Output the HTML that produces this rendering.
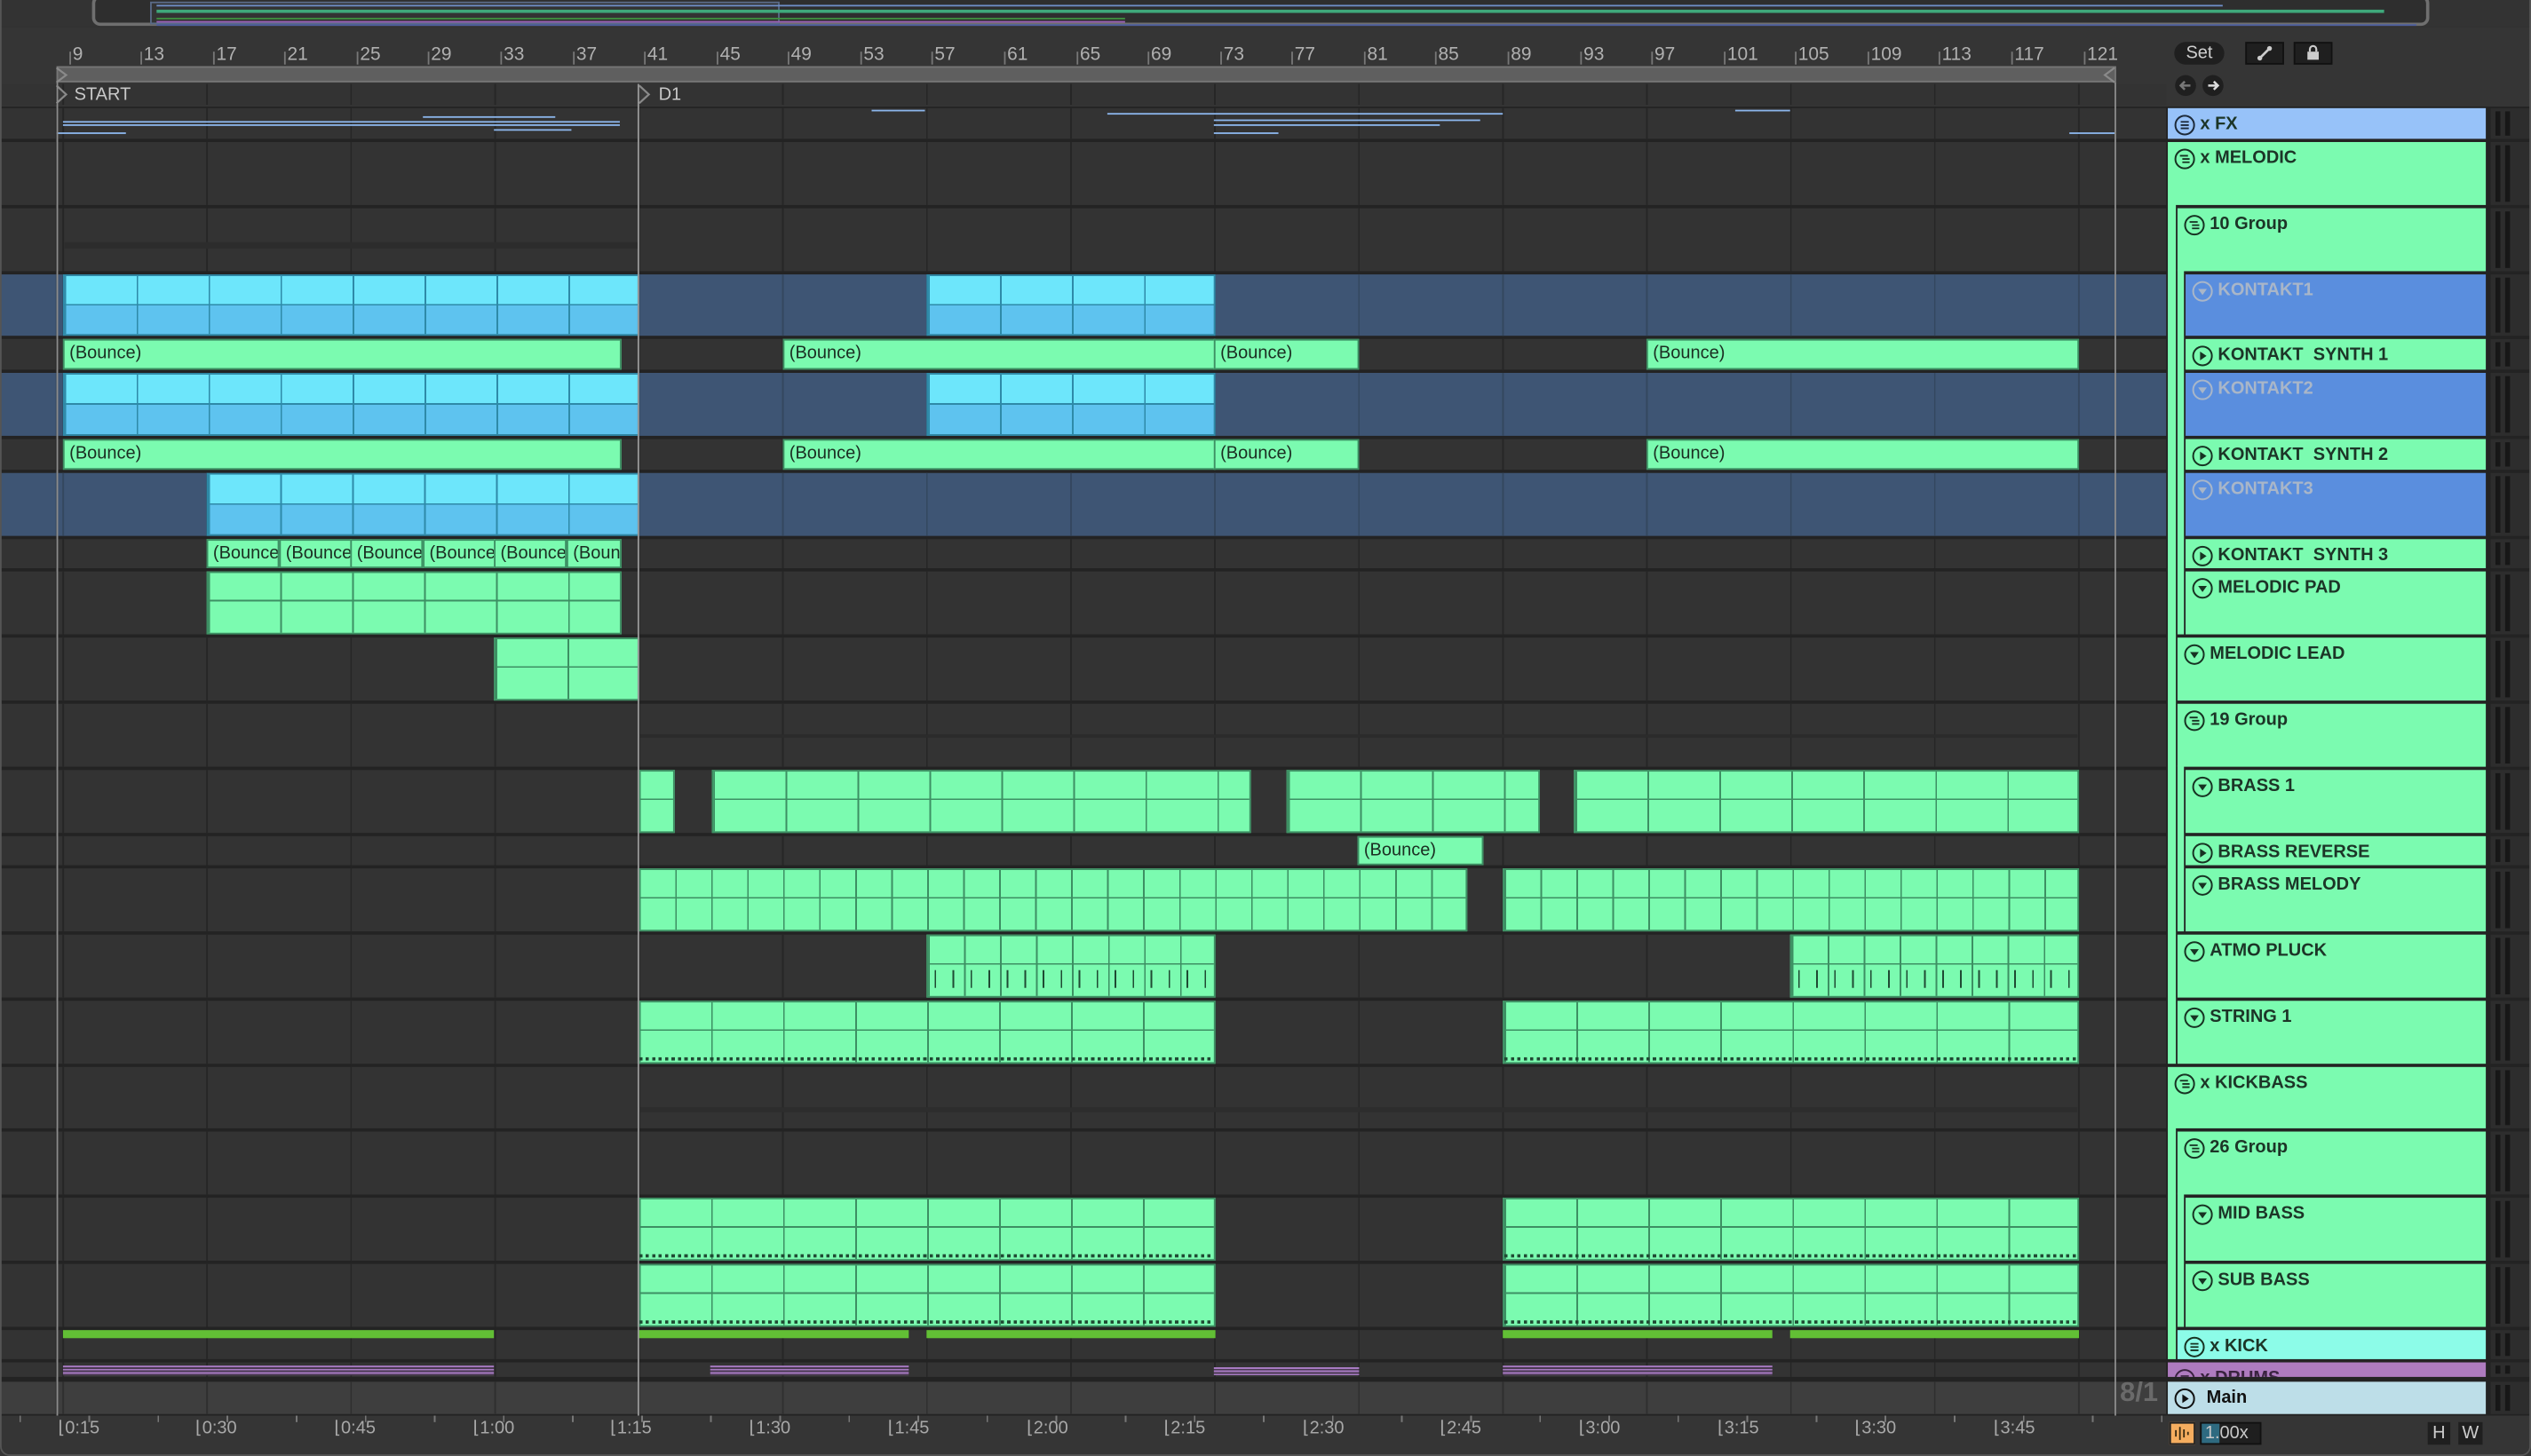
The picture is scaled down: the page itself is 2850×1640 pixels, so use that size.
<!DOCTYPE html>
<html><head><meta charset="utf-8"><style>
*{margin:0;padding:0;box-sizing:border-box}
body{width:2850px;height:1640px;overflow:hidden;background:#2a2a2a;font-family:"Liberation Sans",sans-serif}
#w{position:absolute;left:0;top:0;width:1568px;height:902px;transform:scale(1.81760,1.81818);transform-origin:0 0;background:#232323;overflow:hidden}
.a{position:absolute}
.row{position:absolute;left:0;width:1342px;background-color:#333;background-image:repeating-linear-gradient(90deg,#262626 0 1px,transparent 1px 89.2px);background-position:38.6px 0}
.blue{background-color:#3e5574;background-image:repeating-linear-gradient(90deg,#34475f 0 1px,transparent 1px 89.2px)}
.g{position:absolute;background-color:#7bfbb0;border:1px solid #3d8f63;overflow:hidden;
background-image:linear-gradient(to bottom,transparent 0 45%,#3d8f63 45% calc(45% + 1px),transparent calc(45% + 1px)),repeating-linear-gradient(90deg,#3d8f63 0 1px,transparent 1px 44.6px)}
.g2{background-image:linear-gradient(to bottom,transparent 0 45%,#3d8f63 45% calc(45% + 1px),transparent calc(45% + 1px)),repeating-linear-gradient(90deg,#3d8f63 0 1px,transparent 1px 22.3px)}
.b{position:absolute;background:#7bfbb0;border:1px solid #3d8f63;font-size:11px;color:#1b2e22;line-height:17px;padding-left:3px;overflow:hidden;white-space:nowrap}
.c{position:absolute;border:1px solid #2e8aa8;
background-image:repeating-linear-gradient(90deg,#2e8aa8 0 1px,transparent 1px 44.6px),linear-gradient(to bottom,#6de6fb 0 48%,#2e8aa8 48% calc(48% + 1px),#5ec3ef calc(48% + 1px))}
.bt{position:absolute;left:0;right:0;bottom:1px;height:2px;background:repeating-linear-gradient(90deg,#1f4a33 0 2px,transparent 2px 4px)}
.h{position:absolute;width:auto;right:28px;font-size:11px;font-weight:bold;color:#1c3527;overflow:hidden;white-space:nowrap}
.h svg{position:absolute;left:4px;top:4px}
.h span{position:absolute;left:20px;top:4px;line-height:13px}
.gray{color:#a9b6c8}
.st{position:absolute}
.m{position:absolute;left:1543px;width:25px;background:#2d2d2d}
.m:before,.m:after{content:"";position:absolute;top:2px;bottom:2px;width:3px;background:#171717}
.m:before{left:3px}.m:after{left:9px}
.rl{position:absolute;top:28px;font-size:11.5px;color:#b0b0b0}
.rt{position:absolute;top:32px;width:1px;height:8px;background:#777}
.tl{position:absolute;top:878px;font-size:11px;color:#a8a8a8}
.ln{position:absolute;background:#8cb6ec;height:1px}
</style></head><body><div id="w">

<div class="a" style="left:0;top:0;width:1568px;height:66px;background:#353535"></div>
<div class="a" style="left:0;top:0;width:1568px;height:17px;background:#333"></div>
<div class="a" style="left:57px;top:-3px;width:1448px;height:19px;border:2px solid #6f6f6f;border-radius:5px;background:#2e2e2e"></div>
<div class="a" style="left:93px;top:1px;width:390px;height:14px;border:1px solid #5a6b88;background:#333"></div>
<div class="a" style="left:97px;top:6px;width:1380px;height:2px;background:#3fa87b"></div>
<div class="a" style="left:97px;top:3px;width:1280px;height:1px;background:#6f8fc8"></div>
<div class="a" style="left:97px;top:11px;width:600px;height:1px;background:#3f8f3f"></div>
<div class="a" style="left:97px;top:13px;width:600px;height:1px;background:#9a5fb5"></div>
<div class="a" style="left:97px;top:15px;width:1400px;height:1px;background:#4e5fa0"></div>

<div class="rt" style="left:43px"></div><div class="rl" style="left:45px">9</div>
<div class="rt" style="left:87px"></div><div class="rl" style="left:89px">13</div>
<div class="rt" style="left:132px"></div><div class="rl" style="left:134px">17</div>
<div class="rt" style="left:176px"></div><div class="rl" style="left:178px">21</div>
<div class="rt" style="left:221px"></div><div class="rl" style="left:223px">25</div>
<div class="rt" style="left:265px"></div><div class="rl" style="left:267px">29</div>
<div class="rt" style="left:310px"></div><div class="rl" style="left:312px">33</div>
<div class="rt" style="left:355px"></div><div class="rl" style="left:357px">37</div>
<div class="rt" style="left:399px"></div><div class="rl" style="left:401px">41</div>
<div class="rt" style="left:444px"></div><div class="rl" style="left:446px">45</div>
<div class="rt" style="left:488px"></div><div class="rl" style="left:490px">49</div>
<div class="rt" style="left:533px"></div><div class="rl" style="left:535px">53</div>
<div class="rt" style="left:577px"></div><div class="rl" style="left:579px">57</div>
<div class="rt" style="left:622px"></div><div class="rl" style="left:624px">61</div>
<div class="rt" style="left:667px"></div><div class="rl" style="left:669px">65</div>
<div class="rt" style="left:711px"></div><div class="rl" style="left:713px">69</div>
<div class="rt" style="left:756px"></div><div class="rl" style="left:758px">73</div>
<div class="rt" style="left:800px"></div><div class="rl" style="left:802px">77</div>
<div class="rt" style="left:845px"></div><div class="rl" style="left:847px">81</div>
<div class="rt" style="left:889px"></div><div class="rl" style="left:891px">85</div>
<div class="rt" style="left:934px"></div><div class="rl" style="left:936px">89</div>
<div class="rt" style="left:979px"></div><div class="rl" style="left:981px">93</div>
<div class="rt" style="left:1023px"></div><div class="rl" style="left:1025px">97</div>
<div class="rt" style="left:1068px"></div><div class="rl" style="left:1070px">101</div>
<div class="rt" style="left:1112px"></div><div class="rl" style="left:1114px">105</div>
<div class="rt" style="left:1157px"></div><div class="rl" style="left:1159px">109</div>
<div class="rt" style="left:1201px"></div><div class="rl" style="left:1203px">113</div>
<div class="rt" style="left:1246px"></div><div class="rl" style="left:1248px">117</div>
<div class="rt" style="left:1291px"></div><div class="rl" style="left:1293px">121</div>
<div class="a" style="left:35px;top:41px;width:1276px;height:10px;background:#5f5f5f;border:1px solid #777"></div>
<svg class="a" style="left:34px;top:41px" width="1280" height="12"><path d="M1 1 L7 5.5 L1 10" fill="none" stroke="#8a8a8a" stroke-width="1.2"/><path d="M1276 1 L1270 5.5 L1276 10" fill="none" stroke="#8a8a8a" stroke-width="1.2"/></svg>
<div class="a" style="left:0;top:52px;width:1342px;height:13px;background:#333;background-image:repeating-linear-gradient(90deg,#262626 0 1px,transparent 1px 89.2px);background-position:38.6px 0"></div>
<svg class="a" style="left:34px;top:52px" width="370" height="13"><path d="M1 1 L7 6.5 L1 12" fill="#3a3a3a" stroke="#8a8a8a" stroke-width="1.2"/><path d="M362 1 L368 6.5 L362 12" fill="#3a3a3a" stroke="#8a8a8a" stroke-width="1.2"/></svg>
<div class="a" style="left:46px;top:53px;font-size:11px;color:#c8c8c8">START</div>
<div class="a" style="left:408px;top:53px;font-size:11px;color:#c8c8c8">D1</div>

<div class="a" style="left:1347px;top:26px;width:31px;height:14px;border-radius:7px;background:#1f1f1f;color:#cfcfcf;font-size:11px;text-align:center;line-height:14px">Set</div>
<div class="a" style="left:1391px;top:26px;width:24px;height:14px;background:#1f1f1f;border:1px solid #111"></div>
<svg class="a" style="left:1398px;top:28px" width="10" height="10"><path d="M2 8 L8 2" stroke="#ccc" stroke-width="1.5"/><circle cx="2" cy="8" r="1.5" fill="#ccc"/><circle cx="8" cy="2" r="1.5" fill="#ccc"/></svg>
<div class="a" style="left:1421px;top:26px;width:24px;height:14px;background:#1f1f1f;border:1px solid #111"></div>
<svg class="a" style="left:1428px;top:27px" width="10" height="11"><path d="M3 5 V3.5 A2 2 0 0 1 7 3.5 V5" fill="none" stroke="#ccc" stroke-width="1.2"/><rect x="1.5" y="5" width="7" height="5" fill="#ccc"/></svg>
<svg class="a" style="left:1347px;top:46px" width="34" height="14"><circle cx="7" cy="7" r="6.5" fill="#1f1f1f"/><circle cx="24" cy="7" r="6.5" fill="#1f1f1f"/><path d="M10 7 H4 M6.5 4.5 L4 7 L6.5 9.5" stroke="#777" stroke-width="1.4" fill="none"/><path d="M21 7 H27 M24.5 4.5 L27 7 L24.5 9.5" stroke="#ddd" stroke-width="1.4" fill="none"/></svg>

<div class="row" style="top:67px;height:19px"></div>
<div class="row" style="top:88px;height:39px"></div>
<div class="row" style="top:129px;height:39px"></div>
<div class="row blue" style="top:170px;height:38px"></div>
<div class="row" style="top:210px;height:19px"></div>
<div class="row blue" style="top:231px;height:39px"></div>
<div class="row" style="top:272px;height:19px"></div>
<div class="row blue" style="top:293px;height:39px"></div>
<div class="row" style="top:334px;height:18px"></div>
<div class="row" style="top:354px;height:39px"></div>
<div class="row" style="top:395px;height:39px"></div>
<div class="row" style="top:436px;height:39px"></div>
<div class="row" style="top:477px;height:39px"></div>
<div class="row" style="top:518px;height:18px"></div>
<div class="row" style="top:538px;height:39px"></div>
<div class="row" style="top:579px;height:39px"></div>
<div class="row" style="top:620px;height:39px"></div>
<div class="row" style="top:661px;height:38px"></div>
<div class="row" style="top:701px;height:39px"></div>
<div class="row" style="top:742px;height:39px"></div>
<div class="row" style="top:783px;height:39px"></div>
<div class="row" style="top:824px;height:18px"></div>
<div class="row" style="top:844px;height:9px"></div>
<div class="row" style="top:856px;height:20px;background-color:#3e3e3e;background-image:repeating-linear-gradient(90deg,#2f2f2f 0 1px,transparent 1px 89.2px)"></div>
<div class="a" style="left:1290px;top:853px;width:47px;height:22px;font-size:17px;font-weight:bold;color:#6a6a6a;text-align:right">8/1</div>

<div class="a" style="left:395px;top:455px;width:892px;height:2px;background:#2b2b2b"></div>
<div class="a" style="left:40px;top:150px;width:355px;height:4px;background:#2c2c2c"></div>
<div class="a" style="left:395px;top:686px;width:892px;height:3px;background:#2d2d2d"></div>

<div class="ln" style="left:39px;top:75px;width:345px"></div>
<div class="ln" style="left:39px;top:77px;width:345px"></div>
<div class="ln" style="left:35px;top:82px;width:43px"></div>
<div class="ln" style="left:262px;top:72px;width:82px"></div>
<div class="ln" style="left:306px;top:80px;width:48px"></div>
<div class="ln" style="left:540px;top:68px;width:33px"></div>
<div class="ln" style="left:686px;top:70px;width:245px"></div>
<div class="ln" style="left:752px;top:74px;width:165px"></div>
<div class="ln" style="left:752px;top:77px;width:140px"></div>
<div class="ln" style="left:752px;top:82px;width:40px"></div>
<div class="ln" style="left:1075px;top:68px;width:34px"></div>
<div class="ln" style="left:1282px;top:82px;width:28px"></div>

<div class="c" style="left:39px;top:170px;width:357px;height:38px"></div>
<div class="c" style="left:574px;top:170px;width:179px;height:38px"></div>
<div class="b" style="left:39px;top:210px;width:346px;height:19px">(Bounce)</div>
<div class="b" style="left:485px;top:210px;width:268px;height:19px">(Bounce)</div>
<div class="b" style="left:752px;top:210px;width:90px;height:19px">(Bounce)</div>
<div class="b" style="left:1020px;top:210px;width:268px;height:19px">(Bounce)</div>
<div class="c" style="left:39px;top:231px;width:357px;height:39px"></div>
<div class="c" style="left:574px;top:231px;width:179px;height:39px"></div>
<div class="b" style="left:39px;top:272px;width:346px;height:19px">(Bounce)</div>
<div class="b" style="left:485px;top:272px;width:268px;height:19px">(Bounce)</div>
<div class="b" style="left:752px;top:272px;width:90px;height:19px">(Bounce)</div>
<div class="b" style="left:1020px;top:272px;width:268px;height:19px">(Bounce)</div>
<div class="c" style="left:128px;top:293px;width:268px;height:39px"></div>
<div class="b" style="left:128px;top:334px;width:45px;height:18px">(Bounce)</div>
<div class="b" style="left:173px;top:334px;width:45px;height:18px">(Bounce)</div>
<div class="b" style="left:217px;top:334px;width:45px;height:18px">(Bounce)</div>
<div class="b" style="left:262px;top:334px;width:45px;height:18px">(Bounce)</div>
<div class="b" style="left:306px;top:334px;width:45px;height:18px">(Bounce)</div>
<div class="b" style="left:351px;top:334px;width:34px;height:18px">(Bounce)</div>
<div class="g" style="left:128px;top:354px;width:257px;height:39px"></div>
<div class="g" style="left:306px;top:395px;width:90px;height:39px"></div>
<div class="g" style="left:395px;top:477px;width:23px;height:39px"></div>
<div class="g" style="left:441px;top:477px;width:334px;height:39px"></div>
<div class="g" style="left:797px;top:477px;width:157px;height:39px"></div>
<div class="g" style="left:975px;top:477px;width:313px;height:39px"></div>
<div class="b" style="left:841px;top:518px;width:78px;height:18px">(Bounce)</div>
<div class="g g2" style="left:395px;top:538px;width:514px;height:39px"></div>
<div class="g g2" style="left:931px;top:538px;width:357px;height:39px"></div>
<div class="g g2" style="left:574px;top:579px;width:179px;height:39px"><div class="a" style="left:0;right:0;top:21px;height:11px;background:repeating-linear-gradient(90deg,transparent 0 4px,#1f4a33 4px 5px,transparent 5px 11.15px)"></div></div>
<div class="g g2" style="left:1109px;top:579px;width:179px;height:39px"><div class="a" style="left:0;right:0;top:21px;height:11px;background:repeating-linear-gradient(90deg,transparent 0 4px,#1f4a33 4px 5px,transparent 5px 11.15px)"></div></div>
<div class="g" style="left:395px;top:620px;width:358px;height:39px"><div class="bt"></div></div>
<div class="g" style="left:931px;top:620px;width:357px;height:39px"><div class="bt"></div></div>
<div class="g" style="left:395px;top:742px;width:358px;height:39px"><div class="bt"></div></div>
<div class="g" style="left:931px;top:742px;width:357px;height:39px"><div class="bt"></div></div>
<div class="g" style="left:395px;top:783px;width:358px;height:39px"><div class="bt"></div></div>
<div class="g" style="left:931px;top:783px;width:357px;height:39px"><div class="bt"></div></div>
<div class="a" style="left:39px;top:824px;width:267px;height:5px;background:#62bf35"></div>
<div class="a" style="left:395px;top:824px;width:168px;height:5px;background:#62bf35"></div>
<div class="a" style="left:574px;top:824px;width:179px;height:5px;background:#62bf35"></div>
<div class="a" style="left:931px;top:824px;width:167px;height:5px;background:#62bf35"></div>
<div class="a" style="left:1109px;top:824px;width:179px;height:5px;background:#62bf35"></div>
<div class="a" style="left:39px;top:846px;width:267px;height:6px;background:repeating-linear-gradient(to bottom,#a77ac2 0 1px,#4a3a52 1px 2px)"></div>
<div class="a" style="left:440px;top:846px;width:123px;height:6px;background:repeating-linear-gradient(to bottom,#a77ac2 0 1px,#4a3a52 1px 2px)"></div>
<div class="a" style="left:752px;top:847px;width:90px;height:5px;background:repeating-linear-gradient(to bottom,#a77ac2 0 1px,#4a3a52 1px 2px)"></div>
<div class="a" style="left:931px;top:846px;width:167px;height:6px;background:repeating-linear-gradient(to bottom,#a77ac2 0 1px,#4a3a52 1px 2px)"></div>

<div class="a" style="left:35px;top:51px;width:1px;height:826px;background:#8c8c8c"></div>
<div class="a" style="left:395px;top:52px;width:1px;height:825px;background:#9a9a9a"></div>
<div class="a" style="left:1310px;top:51px;width:1px;height:826px;background:#8c8c8c"></div>

<div class="a" style="left:0;top:877px;width:1568px;height:25px;background:#353535"></div>
<div class="a" style="left:0;top:877px;width:1342px;height:4px;background:repeating-linear-gradient(90deg,transparent 0 12px,#777 12px 13px,transparent 13px 42.8px)"></div>
<div class="tl" style="left:36px">⌊0:15</div>
<div class="tl" style="left:121px">⌊0:30</div>
<div class="tl" style="left:207px">⌊0:45</div>
<div class="tl" style="left:293px">⌊1:00</div>
<div class="tl" style="left:378px">⌊1:15</div>
<div class="tl" style="left:464px">⌊1:30</div>
<div class="tl" style="left:550px">⌊1:45</div>
<div class="tl" style="left:636px">⌊2:00</div>
<div class="tl" style="left:721px">⌊2:15</div>
<div class="tl" style="left:807px">⌊2:30</div>
<div class="tl" style="left:892px">⌊2:45</div>
<div class="tl" style="left:978px">⌊3:00</div>
<div class="tl" style="left:1064px">⌊3:15</div>
<div class="tl" style="left:1149px">⌊3:30</div>
<div class="tl" style="left:1235px">⌊3:45</div>
<div class="a" style="left:1344px;top:881px;width:16px;height:14px;background:#f5ad5f;border:1px solid #222"></div>
<svg class="a" style="left:1346px;top:882px" width="12" height="12"><path d="M2 4V8 M4.5 2V10 M7 3.5V8.5 M9.5 5V7" stroke="#3a2a10" stroke-width="1"/></svg>
<div class="a" style="left:1363px;top:881px;width:38px;height:14px;background:#1f1f1f;border:1px solid #111"></div>
<div class="a" style="left:1364px;top:882px;width:11px;height:12px;background:#2e6a80"></div>
<div class="a" style="left:1366px;top:881px;font-size:11px;color:#c8c8c8;line-height:14px">1.00x</div>
<div class="a" style="left:1504px;top:881px;width:14px;height:14px;background:#1f1f1f;color:#ccc;font-size:11px;text-align:center;line-height:14px">H</div>
<div class="a" style="left:1523px;top:881px;width:15px;height:14px;background:#1f1f1f;color:#ccc;font-size:11px;text-align:center;line-height:14px">W</div>

<div class="st" style="left:1343px;top:126px;width:5px;height:533px;background:#7bfbb0"></div>
<div class="st" style="left:1349px;top:167px;width:4px;height:226px;background:#7bfbb0"></div>
<div class="st" style="left:1349px;top:474px;width:4px;height:103px;background:#7bfbb0"></div>
<div class="st" style="left:1343px;top:698px;width:5px;height:144px;background:#7bfbb0"></div>
<div class="st" style="left:1349px;top:739px;width:4px;height:83px;background:#7bfbb0"></div>

<div class="h" style="left:1343px;top:67px;height:19px;background:#97c2f9"><svg width="13" height="13"><circle cx="6.5" cy="6.5" r="5.8" fill="none" stroke="#1d2a3a" stroke-width="1.1"/><path d="M4 4.5H9M4 6.5H9M4 8.5H9" stroke="#1d2a3a" stroke-width="1"/></svg><span>x FX</span></div>
<div class="h" style="left:1343px;top:88px;height:39px;background:#7bfbb0"><svg width="13" height="13"><circle cx="6.5" cy="6.5" r="5.8" fill="none" stroke="#173222" stroke-width="1.1"/><path d="M3.5 4.5H8.5M5 6.5H9.5M5 8.5H9.5" stroke="#173222" stroke-width="1"/></svg><span>x MELODIC</span></div>
<div class="h" style="left:1349px;top:129px;height:39px;background:#7bfbb0"><svg width="13" height="13"><circle cx="6.5" cy="6.5" r="5.8" fill="none" stroke="#173222" stroke-width="1.1"/><path d="M3.5 4.5H8.5M5 6.5H9.5M5 8.5H9.5" stroke="#173222" stroke-width="1"/></svg><span>10 Group</span></div>
<div class="h gray" style="left:1354px;top:170px;height:38px;background:#5a8ede"><svg width="13" height="13"><circle cx="6.5" cy="6.5" r="5.8" fill="none" stroke="#a9b6c8" stroke-width="1.1"/><path d="M3.8 5H9.2L6.5 8.8Z" fill="#a9b6c8"/></svg><span>KONTAKT1</span></div>
<div class="h" style="left:1354px;top:210px;height:19px;background:#7bfbb0"><svg width="13" height="13"><circle cx="6.5" cy="6.5" r="5.8" fill="none" stroke="#173222" stroke-width="1.1"/><path d="M5 3.8V9.2L9 6.5Z" fill="#173222"/></svg><span>KONTAKT&nbsp; SYNTH 1</span></div>
<div class="h gray" style="left:1354px;top:231px;height:39px;background:#5a8ede"><svg width="13" height="13"><circle cx="6.5" cy="6.5" r="5.8" fill="none" stroke="#a9b6c8" stroke-width="1.1"/><path d="M3.8 5H9.2L6.5 8.8Z" fill="#a9b6c8"/></svg><span>KONTAKT2</span></div>
<div class="h" style="left:1354px;top:272px;height:19px;background:#7bfbb0"><svg width="13" height="13"><circle cx="6.5" cy="6.5" r="5.8" fill="none" stroke="#173222" stroke-width="1.1"/><path d="M5 3.8V9.2L9 6.5Z" fill="#173222"/></svg><span>KONTAKT&nbsp; SYNTH 2</span></div>
<div class="h gray" style="left:1354px;top:293px;height:39px;background:#5a8ede"><svg width="13" height="13"><circle cx="6.5" cy="6.5" r="5.8" fill="none" stroke="#a9b6c8" stroke-width="1.1"/><path d="M3.8 5H9.2L6.5 8.8Z" fill="#a9b6c8"/></svg><span>KONTAKT3</span></div>
<div class="h" style="left:1354px;top:334px;height:18px;background:#7bfbb0"><svg width="13" height="13"><circle cx="6.5" cy="6.5" r="5.8" fill="none" stroke="#173222" stroke-width="1.1"/><path d="M5 3.8V9.2L9 6.5Z" fill="#173222"/></svg><span>KONTAKT&nbsp; SYNTH 3</span></div>
<div class="h" style="left:1354px;top:354px;height:39px;background:#7bfbb0"><svg width="13" height="13"><circle cx="6.5" cy="6.5" r="5.8" fill="none" stroke="#173222" stroke-width="1.1"/><path d="M3.8 5H9.2L6.5 8.8Z" fill="#173222"/></svg><span>MELODIC PAD</span></div>
<div class="h" style="left:1349px;top:395px;height:39px;background:#7bfbb0"><svg width="13" height="13"><circle cx="6.5" cy="6.5" r="5.8" fill="none" stroke="#173222" stroke-width="1.1"/><path d="M3.8 5H9.2L6.5 8.8Z" fill="#173222"/></svg><span>MELODIC LEAD</span></div>
<div class="h" style="left:1349px;top:436px;height:39px;background:#7bfbb0"><svg width="13" height="13"><circle cx="6.5" cy="6.5" r="5.8" fill="none" stroke="#173222" stroke-width="1.1"/><path d="M3.5 4.5H8.5M5 6.5H9.5M5 8.5H9.5" stroke="#173222" stroke-width="1"/></svg><span>19 Group</span></div>
<div class="h" style="left:1354px;top:477px;height:39px;background:#7bfbb0"><svg width="13" height="13"><circle cx="6.5" cy="6.5" r="5.8" fill="none" stroke="#173222" stroke-width="1.1"/><path d="M3.8 5H9.2L6.5 8.8Z" fill="#173222"/></svg><span>BRASS 1</span></div>
<div class="h" style="left:1354px;top:518px;height:18px;background:#7bfbb0"><svg width="13" height="13"><circle cx="6.5" cy="6.5" r="5.8" fill="none" stroke="#173222" stroke-width="1.1"/><path d="M5 3.8V9.2L9 6.5Z" fill="#173222"/></svg><span>BRASS REVERSE</span></div>
<div class="h" style="left:1354px;top:538px;height:39px;background:#7bfbb0"><svg width="13" height="13"><circle cx="6.5" cy="6.5" r="5.8" fill="none" stroke="#173222" stroke-width="1.1"/><path d="M3.8 5H9.2L6.5 8.8Z" fill="#173222"/></svg><span>BRASS MELODY</span></div>
<div class="h" style="left:1349px;top:579px;height:39px;background:#7bfbb0"><svg width="13" height="13"><circle cx="6.5" cy="6.5" r="5.8" fill="none" stroke="#173222" stroke-width="1.1"/><path d="M3.8 5H9.2L6.5 8.8Z" fill="#173222"/></svg><span>ATMO PLUCK</span></div>
<div class="h" style="left:1349px;top:620px;height:39px;background:#7bfbb0"><svg width="13" height="13"><circle cx="6.5" cy="6.5" r="5.8" fill="none" stroke="#173222" stroke-width="1.1"/><path d="M3.8 5H9.2L6.5 8.8Z" fill="#173222"/></svg><span>STRING 1</span></div>
<div class="h" style="left:1343px;top:661px;height:38px;background:#7bfbb0"><svg width="13" height="13"><circle cx="6.5" cy="6.5" r="5.8" fill="none" stroke="#173222" stroke-width="1.1"/><path d="M3.5 4.5H8.5M5 6.5H9.5M5 8.5H9.5" stroke="#173222" stroke-width="1"/></svg><span>x KICKBASS</span></div>
<div class="h" style="left:1349px;top:701px;height:39px;background:#7bfbb0"><svg width="13" height="13"><circle cx="6.5" cy="6.5" r="5.8" fill="none" stroke="#173222" stroke-width="1.1"/><path d="M3.5 4.5H8.5M5 6.5H9.5M5 8.5H9.5" stroke="#173222" stroke-width="1"/></svg><span>26 Group</span></div>
<div class="h" style="left:1354px;top:742px;height:39px;background:#7bfbb0"><svg width="13" height="13"><circle cx="6.5" cy="6.5" r="5.8" fill="none" stroke="#173222" stroke-width="1.1"/><path d="M3.8 5H9.2L6.5 8.8Z" fill="#173222"/></svg><span>MID BASS</span></div>
<div class="h" style="left:1354px;top:783px;height:39px;background:#7bfbb0"><svg width="13" height="13"><circle cx="6.5" cy="6.5" r="5.8" fill="none" stroke="#173222" stroke-width="1.1"/><path d="M3.8 5H9.2L6.5 8.8Z" fill="#173222"/></svg><span>SUB BASS</span></div>
<div class="h" style="left:1349px;top:824px;height:18px;background:#8cfce8"><svg width="13" height="13"><circle cx="6.5" cy="6.5" r="5.8" fill="none" stroke="#173222" stroke-width="1.1"/><path d="M4 4.5H9M4 6.5H9M4 8.5H9" stroke="#173222" stroke-width="1"/></svg><span>x KICK</span></div>
<div class="h" style="left:1343px;top:844px;height:9px;background:#ae7bbf"><svg width="13" height="13"><circle cx="6.5" cy="6.5" r="5.8" fill="none" stroke="#3a2340" stroke-width="1.1"/><path d="M4 4.5H9M4 6.5H9" stroke="#3a2340" stroke-width="1"/></svg><span style="color:#3a2340">x DRUMS</span></div>
<div class="h" style="left:1343px;top:856px;height:20px;background:#bddee8;color:#111"><svg width="13" height="13"><circle cx="6.5" cy="6.5" r="5.8" fill="none" stroke="#111" stroke-width="1.1"/><path d="M5 3.8V9.2L9 6.5Z" fill="#111"/></svg><span style="left:24px;font-weight:bold">Main</span></div>

<div class="m" style="top:67px;height:19px"></div>
<div class="m" style="top:88px;height:39px"></div>
<div class="m" style="top:129px;height:39px"></div>
<div class="m" style="top:170px;height:38px"></div>
<div class="m" style="top:210px;height:19px"></div>
<div class="m" style="top:231px;height:39px"></div>
<div class="m" style="top:272px;height:19px"></div>
<div class="m" style="top:293px;height:39px"></div>
<div class="m" style="top:334px;height:18px"></div>
<div class="m" style="top:354px;height:39px"></div>
<div class="m" style="top:395px;height:39px"></div>
<div class="m" style="top:436px;height:39px"></div>
<div class="m" style="top:477px;height:39px"></div>
<div class="m" style="top:518px;height:18px"></div>
<div class="m" style="top:538px;height:39px"></div>
<div class="m" style="top:579px;height:39px"></div>
<div class="m" style="top:620px;height:39px"></div>
<div class="m" style="top:661px;height:38px"></div>
<div class="m" style="top:701px;height:39px"></div>
<div class="m" style="top:742px;height:39px"></div>
<div class="m" style="top:783px;height:39px"></div>
<div class="m" style="top:824px;height:18px"></div>
<div class="m" style="top:844px;height:9px"></div>
<div class="m" style="top:856px;height:20px"></div>

<div class="a" style="left:0;top:0;width:1568px;height:902px;border:1px solid #555;border-top:none;border-radius:0 0 6px 6px;pointer-events:none"></div>
</div></body></html>
